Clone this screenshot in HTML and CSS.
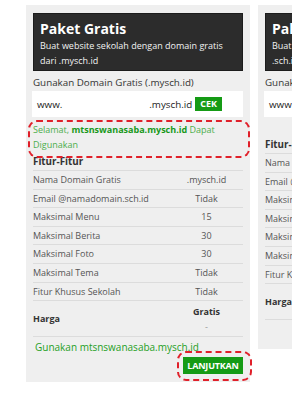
FILE: index.html
```html
<!DOCTYPE html>
<html>
<head>
<meta charset="utf-8">
<link rel="stylesheet" href="styles.css">
</head>
<body>
<div class="page">
  <div class="card">
    <div class="head">
      <div class="title">Paket Gratis</div>
      <div class="sub">Buat website sekolah dengan domain gratis dari .mysch.id</div>
    </div>
    <div class="label">Gunakan Domain Gratis (.mysch.id)</div>
    <div class="domain">
      <span class="www">www.</span>
      <span class="field"></span>
      <span class="tld">.mysch.id</span>
      <span class="cek">CEK</span>
    </div>
    <div class="msg">Selamat, <b>mtsnswanasaba.mysch.id</b> Dapat Digunakan<span class="mark"></span></div>
    <div class="feat-title">Fitur-Fitur</div>
    <table class="feat">
      <tr><td>Nama Domain Gratis</td><td class="val">.mysch.id</td></tr>
      <tr><td>Email @namadomain.sch.id</td><td class="val">Tidak</td></tr>
      <tr><td>Maksimal Menu</td><td class="val">15</td></tr>
      <tr><td>Maksimal Berita</td><td class="val">30</td></tr>
      <tr><td>Maksimal Foto</td><td class="val">30</td></tr>
      <tr><td>Maksimal Tema</td><td class="val">Tidak</td></tr>
      <tr><td>Fitur Khusus Sekolah</td><td class="val">Tidak</td></tr>
      <tr class="price"><td>Harga</td><td class="val"><b>Gratis</b><span class="dash">-</span></td></tr>
    </table>
    <div class="use">Gunakan mtsnswanasaba.mysch.id</div>
    <div class="actions"><span class="go">LANJUTKAN<span class="mark mark-btn"></span></span></div>
  </div>
  <div class="card">
    <div class="head">
      <div class="title">Paket Premium</div>
      <div class="sub">Buat website sekolah dengan domain resmi .sch.id</div>
    </div>
    <div class="label">Gunakan Domain Sendiri (.sch.id)</div>
    <div class="domain">
      <span class="www">www.</span>
      <span class="field"></span>
      <span class="tld">.sch.id</span>
      <span class="cek">CEK</span>
    </div>
    <div class="spacer"></div>
    <div class="feat-title">Fitur-Fitur</div>
    <table class="feat">
      <tr><td>Nama Domain</td><td class="val">.sch.id</td></tr>
      <tr><td>Email @namadomain.sch.id</td><td class="val">Ya</td></tr>
      <tr><td>Maksimal Menu</td><td class="val">Unlimited</td></tr>
      <tr><td>Maksimal Berita</td><td class="val">Unlimited</td></tr>
      <tr><td>Maksimal Foto</td><td class="val">Unlimited</td></tr>
      <tr><td>Maksimal Tema</td><td class="val">Ya</td></tr>
      <tr><td>Fitur Khusus Sekolah</td><td class="val">Ya</td></tr>
      <tr class="price"><td>Harga</td><td class="val"><b>Rp 500.000</b><span class="dash">/tahun</span></td></tr>
    </table>
    <div class="spacer-bottom"></div>
  </div>
</div>
</body>
</html>
```
FILE: styles.css
```css
html, body {
  margin: 0;
  padding: 0;
  background: #ffffff;
}
body {
  font-family: "Open Sans", "DejaVu Sans", sans-serif;
  font-size: 9px;
  color: #555;
  overflow: hidden;
}
.page {
  display: flex;
  align-items: flex-start;
  gap: 8px;
  padding: 5px 0 0 26px;
  width: 600px;
}
.card {
  flex: 0 0 auto;
  width: 210px;
  padding: 8px 7px 8px 7px;
  background: #efefef;
}
.head {
  background: #2c2c2c;
  border: 1px solid #1c1c1c;
  padding: 6px 8px 2px 6px;
  color: #fff;
}
.title {
  font-size: 14px;
  font-weight: 700;
  line-height: 18px;
}
.sub {
  font-size: 9px;
  line-height: 15px;
  color: #f2f2f2;
}
.label {
  margin-top: 5px;
  font-size: 9.8px;
  line-height: 14px;
  color: #333;
}
.domain {
  margin: 1px 0 0 -1px;
  height: 26px;
  background: #fff;
  display: flex;
  align-items: center;
  padding: 0 21px 0 5px;
  font-size: 9.8px;
  color: #222;
}
.field {
  flex: 1;
}
.cek {
  margin-left: 3px;
  background: #159b15;
  color: #fff;
  font-weight: 700;
  font-size: 9px;
  line-height: 14px;
  padding: 0 5px;
}
.msg {
  position: relative;
  margin-top: 3px;
  padding: 1.5px 0 3.5px 0;
  font-size: 9px;
  line-height: 15px;
  color: #4cae4c;
}
.msg b {
  color: #17981a;
}
.mark {
  position: absolute;
  top: 0;
  bottom: -3px;
  left: -5px;
  right: -7px;
  border: 2.5px dashed #e0202a;
  border-radius: 9px;
}
.spacer {
  height: 21px;
}
.feat-title {
  font-size: 9.8px;
  font-weight: 700;
  line-height: 14px;
  color: #333;
  padding-bottom: 1px;
}
.feat {
  width: 100%;
  border-collapse: collapse;
}
.feat td {
  border-top: 1px solid #dcdcdc;
  padding: 0;
  height: 17.6px;
  line-height: 17.6px;
  font-size: 9px;
  color: #555;
  vertical-align: middle;
}
.feat td.val {
  width: 73px;
  text-align: center;
}
.feat tr.price td {
  border-bottom: 1px solid #dcdcdc;
  height: 30px;
  padding: 2.5px 0;
  line-height: 15px;
}
.feat tr.price td:first-child {
  font-weight: 700;
  color: #333;
}
.feat tr.price b {
  display: block;
  color: #333;
}
.dash {
  display: block;
  color: #999;
}
.use {
  margin-top: 3px;
  font-size: 10px;
  line-height: 14px;
  color: #1fa01f;
  padding-left: 2px;
}
.actions {
  display: flex;
  justify-content: flex-end;
  margin-top: 3px;
}
.go {
  position: relative;
  display: block;
  width: 60px;
  height: 17px;
  line-height: 17px;
  text-align: center;
  background: #159b15;
  color: #fff;
  font-weight: 700;
  font-size: 9px;
  letter-spacing: -0.2px;
}
.mark-btn {
  top: -6px;
  bottom: -7px;
  left: -6px;
  right: -9px;
}
.spacer-bottom {
  height: 21px;
}
```
